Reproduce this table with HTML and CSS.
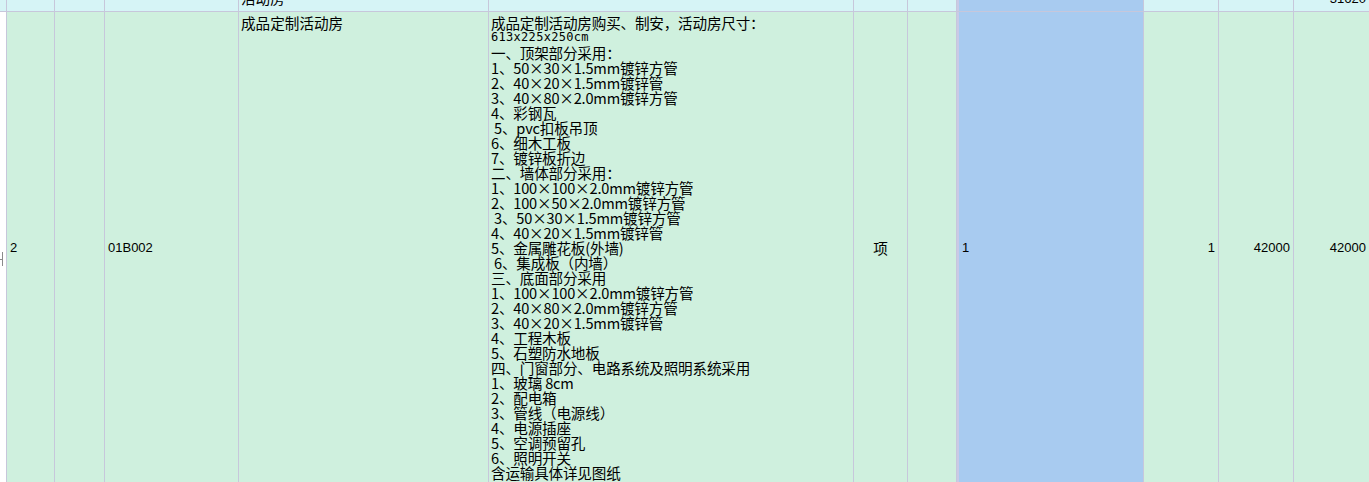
FILE: index.html
```html
<!DOCTYPE html>
<html lang="zh-CN">
<head>
<meta charset="utf-8">
<title>清单</title>
<link rel="stylesheet" href="styles.css">
</head>
<body>
<div class="sheet">
  <div class="cell top c0"></div>
  <div class="cell top"></div>
  <div class="cell top"></div>
  <div class="cell top"></div>
  <div class="cell top"><span class="cut cjk">活动房</span></div>
  <div class="cell top"></div>
  <div class="cell top"></div>
  <div class="cell top"></div>
  <div class="cell top sel"></div>
  <div class="cell top"></div>
  <div class="cell top"></div>
  <div class="cell top right"><span class="cut num">31620</span></div>

  <div class="cell body blank"><span class="mark"></span></div>
  <div class="cell body mid num">2</div>
  <div class="cell body"></div>
  <div class="cell body mid num">01B002</div>
  <div class="cell body cjk name">成品定制活动房</div>
  <div class="cell body cjk desc"><div>成品定制活动房购买、制安，活动房尺寸：</div><div class="size">613x225x250cm</div><div>一、顶架部分采用：</div><div>1、50×30×1.5mm镀锌方管</div><div>2、40×20×1.5mm镀锌管</div><div>3、40×80×2.0mm镀锌方管</div><div>4、彩钢瓦</div><div>&nbsp;5、pvc扣板吊顶</div><div>6、细木工板</div><div>7、镀锌板折边</div><div>二、墙体部分采用：</div><div>1、100×100×2.0mm镀锌方管</div><div>2、100×50×2.0mm镀锌方管</div><div>&nbsp;3、50×30×1.5mm镀锌方管</div><div>4、40×20×1.5mm镀锌管</div><div>5、金属雕花板(外墙)</div><div>&nbsp;6、集成板（内墙）</div><div>三、底面部分采用</div><div>1、100×100×2.0mm镀锌方管</div><div>2、40×80×2.0mm镀锌方管</div><div>3、40×20×1.5mm镀锌管</div><div>4、工程木板</div><div>5、石塑防水地板</div><div>四、门窗部分、电路系统及照明系统采用</div><div>1、玻璃 8cm</div><div>2、配电箱</div><div>3、管线（电源线）</div><div>4、电源插座</div><div>5、空调预留孔</div><div>6、照明开关</div><div>含运输具体详见图纸</div></div>
  <div class="cell body mid center cjk">项</div>
  <div class="cell body"></div>
  <div class="cell body sel mid num">1</div>
  <div class="cell body mid right num">1</div>
  <div class="cell body mid right num">42000</div>
  <div class="cell body mid right num">42000</div>
</div>
</body>
</html>
```

FILE: styles.css
```css
html, body {
  margin: 0;
  padding: 0;
  background: #ffffff;
  overflow: hidden;
}

.sheet {
  display: grid;
  grid-template-columns: 6px 47px 49px 133px 249px 364px 53px 48px 186px 74px 74px 75px;
  grid-template-rows: 11px 470px;
  gap: 1px;
  background: #c7c7db;
  width: 1369px;
}

.cell {
  overflow: hidden;
  color: #000000;
  box-sizing: border-box;
}

.top {
  background: #d6f4f6;
  display: flex;
  align-items: flex-end;
}

.body {
  background: #cff0de;
}

.blank {
  background: #ffffff;
  position: relative;
}

.mark {
  position: absolute;
  left: 2px;
  top: 240px;
  width: 1px;
  height: 14px;
  background: #8a8a8a;
}

.mark::before {
  content: "";
  position: absolute;
  left: -2px;
  top: 7px;
  width: 2px;
  height: 1px;
  background: #8a8a8a;
}

.sel {
  background: #a8cbf0;
  border-left: 2px solid #cacae6;
}

.cjk {
  font-family: "Noto Sans CJK SC", "Noto Sans", sans-serif;
  font-size: 14.6px;
  line-height: 15px;
}

.num {
  font-family: "Liberation Sans", Arial, sans-serif;
  font-size: 13px;
  line-height: 15px;
}

.cut {
  display: block;
  padding: 0 2px;
  margin-bottom: 6px;
  white-space: nowrap;
}

.top.right {
  justify-content: flex-end;
}

.top.right .cut {
  margin-bottom: 5px;
  padding-right: 3px;
}

.mid {
  display: flex;
  align-items: center;
  padding: 0 3px;
  white-space: nowrap;
}

.mid.right {
  justify-content: flex-end;
}

.mid.center {
  justify-content: center;
}

.name {
  padding: 3px 2px 0;
}

.desc {
  padding: 3px 2px 2px;
  white-space: nowrap;
  letter-spacing: -0.2px;
}

.desc .size {
  font-family: "DejaVu Sans Mono", "Liberation Mono", monospace;
  font-size: 12px;
  letter-spacing: 0.3px;
}
```
